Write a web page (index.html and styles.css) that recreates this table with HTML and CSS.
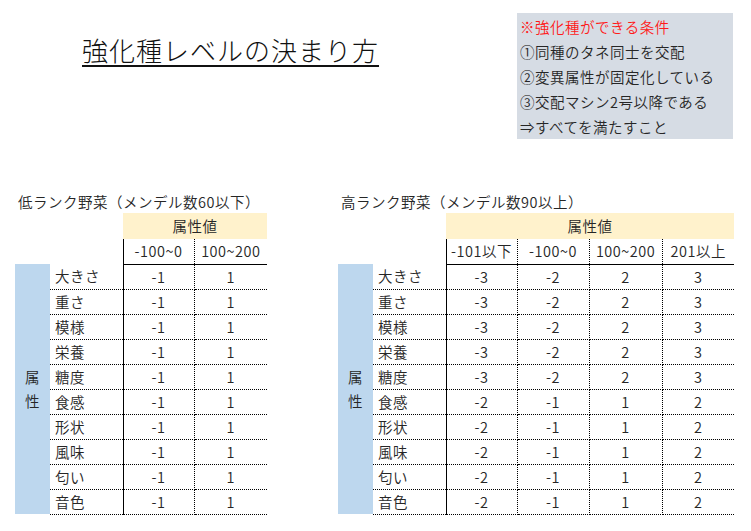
FILE: index.html
```html
<!DOCTYPE html>
<html lang="ja">
<head>
<meta charset="utf-8">
<title>強化種レベルの決まり方</title>
<link rel="stylesheet" href="styles.css">
</head>
<body>
<div class="top">
  <h1 class="title">強化種レベルの決まり方</h1>
  <div class="note">
    <div class="note-red">※強化種ができる条件</div>
    <div>①同種のタネ同士を交配</div>
    <div>②変異属性が固定化している</div>
    <div>③交配マシン2号以降である</div>
    <div>⇒すべてを満たすこと</div>
  </div>
</div>

<div class="tables">
  <div class="block">
    <div class="caption">低ランク野菜（メンデル数60以下）</div>
    <table class="grid">
      <colgroup>
        <col class="c-attr"><col class="c-label"><col class="c-v71"><col class="c-v73">
      </colgroup>
      <tr class="h1"><td></td><td></td><td class="yellow" colspan="2">属性値</td></tr>
      <tr class="h2"><td></td><td></td><td class="v first">-100~0</td><td class="v last">100~200</td></tr>
      <tr><td class="attr" rowspan="10">属<br>性</td><td class="lbl">大きさ</td><td class="v">-1</td><td class="v last">1</td></tr>
      <tr><td class="lbl">重さ</td><td class="v">-1</td><td class="v last">1</td></tr>
      <tr><td class="lbl">模様</td><td class="v">-1</td><td class="v last">1</td></tr>
      <tr><td class="lbl">栄養</td><td class="v">-1</td><td class="v last">1</td></tr>
      <tr><td class="lbl">糖度</td><td class="v">-1</td><td class="v last">1</td></tr>
      <tr><td class="lbl">食感</td><td class="v">-1</td><td class="v last">1</td></tr>
      <tr><td class="lbl">形状</td><td class="v">-1</td><td class="v last">1</td></tr>
      <tr><td class="lbl">風味</td><td class="v">-1</td><td class="v last">1</td></tr>
      <tr><td class="lbl">匂い</td><td class="v">-1</td><td class="v last">1</td></tr>
      <tr><td class="lbl">音色</td><td class="v">-1</td><td class="v last">1</td></tr>
    </table>
  </div>

  <div class="block">
    <div class="caption">高ランク野菜（メンデル数90以上）</div>
    <table class="grid">
      <colgroup>
        <col class="c-attr"><col class="c-label"><col class="c-v71"><col class="c-v72"><col class="c-v73"><col class="c-v72">
      </colgroup>
      <tr class="h1"><td></td><td></td><td class="yellow" colspan="4">属性値</td></tr>
      <tr class="h2"><td></td><td></td><td class="v first">-101以下</td><td class="v">-100~0</td><td class="v">100~200</td><td class="v last">201以上</td></tr>
      <tr><td class="attr" rowspan="10">属<br>性</td><td class="lbl">大きさ</td><td class="v">-3</td><td class="v">-2</td><td class="v">2</td><td class="v last">3</td></tr>
      <tr><td class="lbl">重さ</td><td class="v">-3</td><td class="v">-2</td><td class="v">2</td><td class="v last">3</td></tr>
      <tr><td class="lbl">模様</td><td class="v">-3</td><td class="v">-2</td><td class="v">2</td><td class="v last">3</td></tr>
      <tr><td class="lbl">栄養</td><td class="v">-3</td><td class="v">-2</td><td class="v">2</td><td class="v last">3</td></tr>
      <tr><td class="lbl">糖度</td><td class="v">-3</td><td class="v">-2</td><td class="v">2</td><td class="v last">3</td></tr>
      <tr><td class="lbl">食感</td><td class="v">-2</td><td class="v">-1</td><td class="v">1</td><td class="v last">2</td></tr>
      <tr><td class="lbl">形状</td><td class="v">-2</td><td class="v">-1</td><td class="v">1</td><td class="v last">2</td></tr>
      <tr><td class="lbl">風味</td><td class="v">-2</td><td class="v">-1</td><td class="v">1</td><td class="v last">2</td></tr>
      <tr><td class="lbl">匂い</td><td class="v">-2</td><td class="v">-1</td><td class="v">1</td><td class="v last">2</td></tr>
      <tr><td class="lbl">音色</td><td class="v">-2</td><td class="v">-1</td><td class="v">1</td><td class="v last">2</td></tr>
    </table>
  </div>
</div>
</body>
</html>
```

FILE: styles.css
```css
* { box-sizing: border-box; }

html, body {
  margin: 0;
  padding: 0;
  background: #ffffff;
}

body {
  width: 751px;
  height: 531px;
  overflow: hidden;
  font-family: "Noto Sans CJK JP", "Noto Sans", sans-serif;
  font-size: 14.5px;
  font-weight: 350;
  letter-spacing: 0.5px;
  color: #262626;
}

.top {
  display: flex;
  align-items: flex-start;
  padding-top: 13px;
}

.title {
  margin: 19px 0 0 82px;
  font-size: 26px;
  font-weight: 300;
  line-height: 36px;
  letter-spacing: 1px;
  color: #111111;
  text-decoration: underline;
  text-decoration-thickness: 1.5px;
  text-underline-offset: 4px;
  white-space: nowrap;
}

.note {
  margin-left: auto;
  margin-right: 18px;
  width: 216px;
  height: 126px;
  padding: 1px 0 0 3px;
  background: #d6dce4;
  line-height: 25px;
  white-space: nowrap;
}

.note-red {
  color: #ff1a1a;
}

.tables {
  display: flex;
  align-items: flex-start;
  gap: 71px;
  margin-top: 52px;
  padding-left: 15px;
}

.caption {
  height: 22px;
  line-height: 22px;
  padding-left: 3px;
  white-space: nowrap;
}

.grid {
  border-collapse: collapse;
  table-layout: fixed;
}

.c-attr { width: 35px; }
.c-label { width: 73px; }
.c-v71 { width: 71px; }
.c-v72 { width: 72px; }
.c-v73 { width: 73px; }

.grid td {
  height: 25px;
  padding: 0;
  line-height: 24px;
  white-space: nowrap;
}

.grid tr.h1 td {
  height: 26px;
}

.yellow {
  background: #fff2cc;
  text-align: center;
}

.attr {
  background: #bdd7ee;
  text-align: center;
  vertical-align: middle;
  line-height: 25px;
}

.lbl {
  padding-left: 5px !important;
  border-right: 1px solid #000000;
  border-bottom: 1px dotted #000000;
}

.v {
  text-align: center;
  border-right: 1px dotted #000000;
  border-bottom: 1px dotted #000000;
}

.v.last {
  border-right: none;
}

.h2 .v {
  border-bottom: 1px solid #000000;
}

.h2 .v.first {
  border-left: 1px solid #000000;
}
```
